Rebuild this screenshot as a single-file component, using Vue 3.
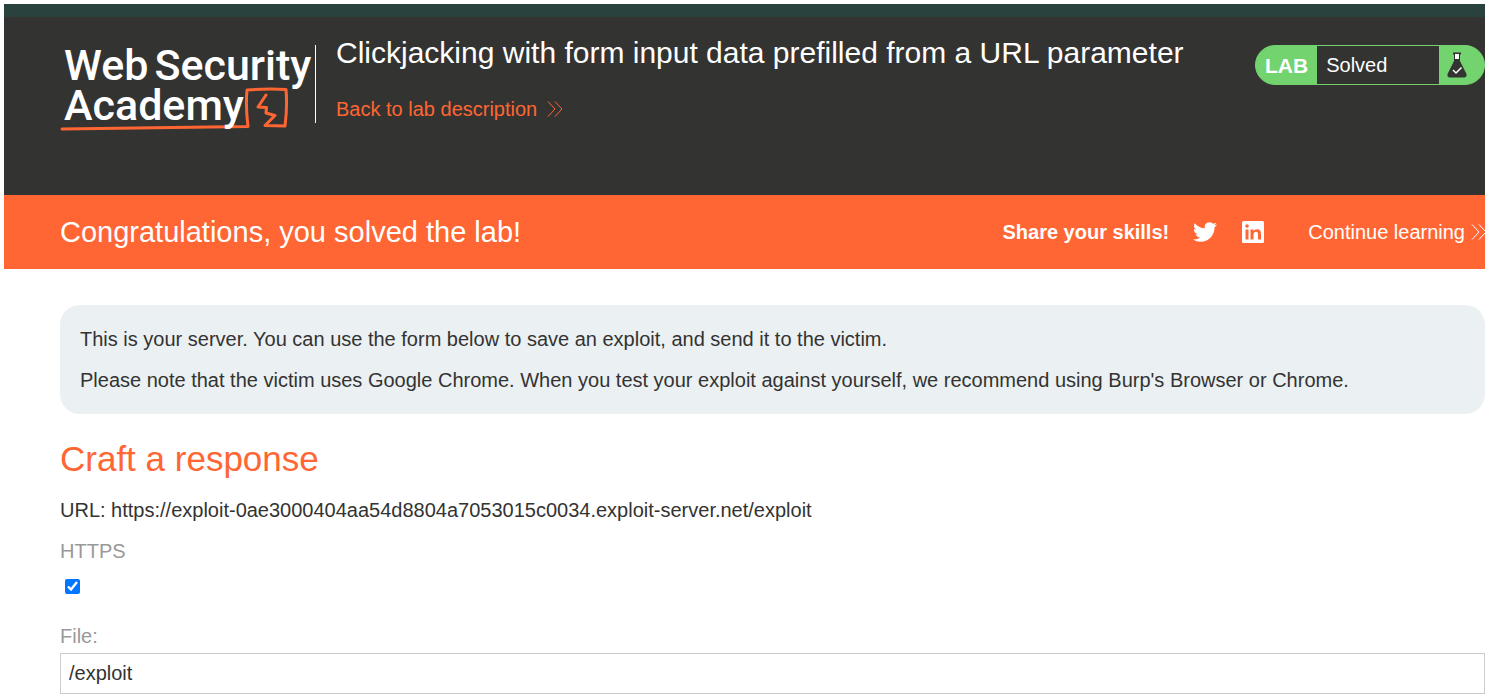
<script setup>
import { ref } from 'vue'

const https = ref(true)
const file = ref('/exploit')
</script>

<template>
  <div class="page">
    <header class="header">
      <div class="brand">
        <a class="logo" href="#" aria-label="Web Security Academy">
          <span class="logo-line"><span>Web</span><span>Security</span></span>
          <span class="logo-line">Academy</span>
          <svg class="logo-mark" viewBox="0 0 230 46" width="230" height="46" aria-hidden="true">
            <path d="M2 42 Q90 41 188 39.500 Q185.500 20 187 3 Q207 1.500 226 2.500 Q227.500 20 225 39 L205 38.500 L215 28.500 L206 26 L206.500 20.500 L198 20 L206 8" fill="none" stroke="#ff6633" stroke-width="3" stroke-linejoin="round" stroke-linecap="round" />
          </svg>
        </a>
        <div class="titles">
          <h1>Clickjacking with form input data prefilled from a URL parameter</h1>
          <a class="back" href="#">Back to lab description
            <svg viewBox="0 0 16 16" width="16" height="16" aria-hidden="true"><path d="M1 .5 8 8 1 15.500M8 .5 15 8 8 15.500" fill="none" stroke="currentColor" /></svg>
          </a>
        </div>
      </div>
      <div class="status">
        <span class="status-tag">LAB</span>
        <span class="status-text">Solved</span>
        <span class="status-icon">
          <svg viewBox="0 0 20 26" width="20" height="26" aria-hidden="true">
            <path d="M6 1.500H14" stroke="#333332" stroke-width="2" />
            <path d="M7 1.500V9L.5 22Q0 25 2.500 25.500H17.500Q20 25 19.500 22L13 9V1.500Z" fill="#333332" />
            <path d="M8 2H12V7H8Z" fill="#fff" />
            <path d="M6 18 9 21 14.500 15.500" fill="none" stroke="#fff" stroke-width="1.500" />
          </svg>
        </span>
      </div>
    </header>

    <section class="banner">
      <h2>Congratulations, you solved the lab!</h2>
      <div class="share">
        <strong>Share your skills!</strong>
        <a class="twitter" href="#" aria-label="Twitter">
          <svg viewBox="0 0 24 24" width="24" height="24"><path fill="#fff" d="M23.953 4.570a10 10 0 01-2.825.775 4.958 4.958 0 002.163-2.723c-.951.555-2.005.959-3.127 1.184a4.920 4.920 0 00-8.384 4.482C7.690 8.095 4.067 6.130 1.640 3.162a4.822 4.822 0 00-.666 2.475c0 1.710.87 3.213 2.188 4.096a4.904 4.904 0 01-2.228-.616v.06a4.923 4.923 0 003.946 4.827 4.996 4.996 0 01-2.212.085 4.936 4.936 0 004.604 3.417 9.867 9.867 0 01-6.102 2.105c-.39 0-.779-.023-1.170-.067a13.995 13.995 0 007.557 2.209c9.053 0 13.998-7.496 13.998-13.985 0-.21 0-.42-.015-.63A9.935 9.935 0 0024 4.590z" /></svg>
        </a>
        <a class="linkedin" href="#" aria-label="LinkedIn">
          <svg viewBox="0 0 24 24" width="24" height="24">
            <rect x="1" y="1" width="22" height="22" rx="1.500" fill="#fff" />
            <path d="M4.500 9.500H7.500V19.500H4.500ZM9.500 9.500H12.500V11Q13.500 9.200 16 9.200C19 9.200 20 11 20 14V19.500H17V14.500C17 12.500 16.500 11.700 15 11.700S12.500 12.800 12.500 14.500V19.500H9.500Z" fill="#ff6633" />
            <circle cx="6" cy="6" r="1.800" fill="#ff6633" />
          </svg>
        </a>
        <a class="continue" href="#">Continue learning
          <svg viewBox="0 0 16 16" width="16" height="16" aria-hidden="true"><path d="M1 .5 8 8 1 15.500M8 .5 15 8 8 15.500" fill="none" stroke="currentColor" /></svg>
        </a>
      </div>
    </section>

    <main class="content">
      <div class="notice">
        <p>This is your server. You can use the form below to save an exploit, and send it to the victim.</p>
        <p>Please note that the victim uses Google Chrome. When you test your exploit against yourself, we recommend using Burp's Browser or Chrome.</p>
      </div>
      <h2>Craft a response</h2>
      <form @submit.prevent>
        <p class="url">URL: https://exploit-0ae3000404aa54d8804a7053015c0034.exploit-server.net/exploit</p>
        <label for="https">HTTPS</label>
        <input id="https" v-model="https" class="check" type="checkbox">
        <label for="file">File:</label>
        <input id="file" v-model="file" class="text" type="text">
      </form>
    </main>
  </div>
</template>

<style>
body {
  margin: 0;
  background: #fff;
}
</style>

<style scoped>
.page {
  padding: 4px;
  color: #333332;
  font: 20px/24px "Liberation Sans", Arial, sans-serif;
}
h1, h2, p {
  margin: 0;
  font-weight: 400;
}
a {
  color: inherit;
  text-decoration: none;
}
svg {
  display: block;
}
.header {
  display: flex;
  justify-content: space-between;
  align-items: flex-start;
  min-height: 150px;
  padding: 28px 0 0 56px;
  border-top: 13px solid #29423d;
  background: #333332;
  color: #fff;
}
.brand {
  display: flex;
}
.logo {
  position: relative;
  isolation: isolate;
  box-sizing: border-box;
  width: 256px;
  height: 78px;
  padding-left: 4px;
  border-right: 1px solid #fff;
  font: 500 43px/40px Roboto, sans-serif;
}
.logo-line {
  display: flex;
  gap: 6px;
  white-space: nowrap;
}
.logo-mark {
  position: absolute;
  z-index: -1;
  left: 0;
  top: 42px;
}
.titles {
  padding-left: 20px;
}
h1 {
  margin-top: -10px;
  font-size: 30px;
  line-height: 36px;
}
.back, .continue {
  display: flex;
  align-items: center;
  gap: 10px;
}
.back {
  margin-top: 26px;
  color: #ff6633;
}
.status {
  display: flex;
  box-sizing: border-box;
  width: 230px;
  height: 40px;
  overflow: hidden;
  border: 1px solid #72d36f;
  border-radius: 20px;
  background: #72d36f;
  line-height: 38px;
}
.status-tag {
  padding: 0 9px;
  font-size: 21px;
  font-weight: 700;
  line-height: 40px;
}
.status-text {
  flex: 1;
  padding-left: 9px;
  background: #333332;
}
.status-icon {
  display: flex;
  align-items: center;
  width: 37px;
  padding-left: 8px;
}
.banner {
  display: flex;
  align-items: center;
  justify-content: space-between;
  min-height: 74px;
  padding-left: 56px;
  overflow: hidden;
  background: #ff6633;
  color: #fff;
}
.banner h2 {
  font-size: 29px;
  line-height: 32px;
}
.share {
  display: flex;
  align-items: center;
  margin-right: -2px;
}
.twitter, .linkedin {
  margin-left: 24px;
}
.continue {
  gap: 6px;
  margin-left: 43px;
}
.content {
  padding: 36px 0 0 56px;
}
.notice {
  display: grid;
  gap: 17px;
  padding: 22px 20px;
  border-radius: 20px;
  background: #ebf0f2;
}
.content h2 {
  margin: 25px 0 19px;
  color: #ff6633;
  font-size: 35px;
  line-height: 40px;
}
label {
  display: block;
  margin-top: 17px;
  color: #999;
}
.check {
  display: block;
  width: 15px;
  height: 15px;
  margin: 16px 5px 30px;
  accent-color: #0075ff;
}
.text {
  box-sizing: border-box;
  display: block;
  width: 100%;
  height: 41px;
  margin-top: 5px;
  padding: 0 8px;
  border: 1px solid #ccc;
  border-radius: 0;
  color: #333332;
  font: inherit;
}
</style>
